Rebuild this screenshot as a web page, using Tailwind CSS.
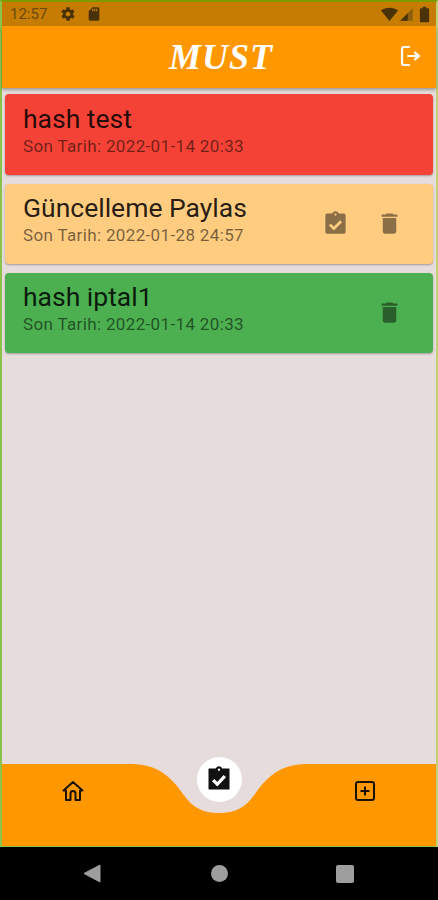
<!DOCTYPE html>
<html lang="en">
<head>
  <meta charset="UTF-8" />
  <meta name="viewport" content="width=device-width, initial-scale=1.0" />
  <title>Must</title>
  <script src="https://cdn.jsdelivr.net/npm/@tailwindcss/browser@4"></script>
</head>
<body class="bg-black font-['Roboto',sans-serif]">
  <div class="flex flex-col w-[438px] h-[900px] overflow-hidden">
    <div class="flex flex-col h-[847px] border-x-2 border-t-2 border-b border-l-[#8bc34a] border-r-[#c3cf74] border-t-[#7d9b00] border-b-[#8bc34a] bg-[#e6dcdb]">
      <!-- status bar -->
      <div class="flex items-center h-[24px] pl-[8px] pr-[4px] bg-[#c67c00] text-[#6b4a10]">
        <span class="text-[15px] w-[51px]">12:57</span>
        <svg class="w-[16px] h-[16px] -ml-[1px]" viewBox="0 0 24 24" fill="#4a3208"><path d="M19.4 13c0-.3.1-.6.1-1s0-.7-.1-1l2.1-1.6c.2-.2.2-.4.1-.6l-2-3.5c-.1-.2-.4-.3-.6-.2l-2.5 1c-.5-.4-1.1-.7-1.7-1l-.4-2.6c0-.3-.2-.5-.5-.5h-4c-.3 0-.5.2-.5.4l-.4 2.7c-.6.2-1.1.6-1.7 1l-2.5-1c-.2-.1-.5 0-.6.2l-2 3.5c-.1.2-.1.5.1.6L4.6 11c0 .3-.1.7-.1 1s0 .7.1 1l-2.1 1.6c-.2.2-.2.4-.1.6l2 3.5c.1.2.4.3.6.2l2.5-1c.5.4 1.1.7 1.7 1l.4 2.6c0 .3.2.5.5.5h4c.3 0 .5-.2.5-.4l.4-2.7c.6-.2 1.200-.6 1.700-1l2.500 1c.2.1.5 0 .6-.2l2-3.500c.1-.2.1-.5-.1-.6L19.400 13zM12 15.500c-1.900 0-3.500-1.600-3.500-3.500s1.600-3.500 3.500-3.500 3.500 1.600 3.500 3.500-1.600 3.500-3.500 3.500z"/></svg>
        <svg class="w-[16px] h-[16px] ml-[10px]" viewBox="0 0 24 24" fill="#4a3208"><path d="M18 2h-8L4 8v12c0 1.100.9 2 2 2h12c1.100 0 2-.9 2-2V4c0-1.100-.9-2-2-2zm-7 6H9V4h2v4zm3 0h-2V4h2v4zm3 0h-2V4h2v4z"/></svg>
        <div class="flex-1"></div>
        <svg class="w-[17px] h-[17px]" viewBox="0 0 24 24" fill="#4a3208"><path d="M12 21 0 6.500C3.300 3.900 7.500 2.500 12 2.500s8.700 1.400 12 4L12 21z"/></svg>
        <svg class="w-[15px] h-[15px] ml-[1px]" viewBox="0 0 24 24"><path d="M22 2v20H2z" fill="#8a6010"/><path d="M14 10v12H2l12-12z" fill="#4a3208"/></svg>
        <svg class="w-[15px] h-[17px] ml-[3px]" viewBox="0 0 15 24" fill="#4a3208"><path d="M5 1h5v2h2.500c.8 0 1.500.7 1.500 1.500v17c0 .8-.7 1.500-1.500 1.500h-10C1.700 23 1 22.300 1 21.500v-17C1 3.700 1.700 3 2.500 3H5z"/></svg>
      </div>

      <!-- app bar -->
      <div class="flex items-center justify-center relative h-[62px] bg-[#ff9800] shadow-[0_2px_3px_rgba(0,0,0,0.3)]">
        <span class="font-['Liberation_Serif',serif] italic font-bold text-white text-[36px] tracking-[1px] leading-none ml-[4px]">MUST</span>
        <svg class="absolute right-[13px] top-[18px] w-[24px] h-[24px]" viewBox="0 0 24 24" fill="none" stroke="#fff" stroke-width="2.200" stroke-linecap="round" stroke-linejoin="round"><path d="M10 3H5a2 2 0 0 0-2 2v14a2 2 0 0 0 2 2h5"/><path d="M9 12h11"/><path d="M16 8.500l4 3.500-4 3.500" fill="#fff"/></svg>
      </div>

      <!-- task list -->
      <div class="flex-1 flex flex-col gap-[9px] pt-[6px] px-[3px]">
        <div class="flex items-center h-[81px] pl-[18px] pr-[30px] rounded-[4px] bg-[#f44336] shadow-[0_1px_2px_rgba(0,0,0,0.3)]">
          <div class="flex-1 -mt-[7px]">
            <div class="text-[26.5px] leading-[30px] text-black/87">hash test</div>
            <div class="text-[17px] tracking-[0.35px] leading-[24px] text-black/55">Son Tarih: 2022-01-14 20:33</div>
          </div>
        </div>
        <div class="flex items-center h-[80px] pl-[18px] pr-[30px] rounded-[4px] bg-[#ffcc80] shadow-[0_1px_2px_rgba(0,0,0,0.3)]">
          <div class="flex-1 -mt-[8px]">
            <div class="text-[26.5px] leading-[30px] text-black/87">Güncelleme Paylas</div>
            <div class="text-[17px] tracking-[0.35px] leading-[24px] text-black/55">Son Tarih: 2022-01-28 24:57</div>
          </div>
          <svg class="w-[27px] h-[27px] mr-[27px] -mt-[2px]" viewBox="0 0 24 24"><path fill="#8a6e45" d="M4.500 3h4.700C9.600 1.800 10.700 1 12 1s2.400.8 2.800 2h4.700c.8 0 1.500.7 1.500 1.500v15c0 .8-.7 1.500-1.500 1.500h-15c-.8 0-1.500-.7-1.500-1.500v-15C3 3.700 3.700 3 4.500 3z"/><circle cx="12" cy="4" r="1" fill="#ffcc80"/><path d="M7 13l3.500 3.500L17 10" fill="none" stroke="#ffcc80" stroke-width="2.400"/></svg>
          <svg class="w-[27px] h-[27px] -mt-[2px]" viewBox="0 0 24 24" fill="#000" fill-opacity="0.46"><path d="M6 19c0 1.100.9 2 2 2h8c1.100 0 2-.9 2-2V7H6v12zM19 4h-3.500l-1-1h-5l-1 1H5v2h14V4z"/></svg>
        </div>
        <div class="flex items-center h-[80px] pl-[18px] pr-[30px] rounded-[4px] bg-[#4caf50] shadow-[0_1px_2px_rgba(0,0,0,0.3)]">
          <div class="flex-1 -mt-[8px]">
            <div class="text-[26.5px] leading-[30px] text-black/87">hash iptal1</div>
            <div class="text-[17px] tracking-[0.35px] leading-[24px] text-black/55">Son Tarih: 2022-01-14 20:33</div>
          </div>
          <svg class="w-[27px] h-[27px] -mt-[2px]" viewBox="0 0 24 24" fill="#000" fill-opacity="0.46"><path d="M6 19c0 1.100.9 2 2 2h8c1.100 0 2-.9 2-2V7H6v12zM19 4h-3.500l-1-1h-5l-1 1H5v2h14V4z"/></svg>
        </div>
      </div>

      <!-- bottom nav -->
      <div class="relative h-[82px]">
        <svg class="absolute left-0 top-0 w-[434px] h-[82px]" viewBox="2 0 434 82"><path fill="#ff9800" d="M2 0H132C158 0 172 14 183 30C193 44 203 49 219 49C235 49 245 44 255 30C266 14 280 0 306 0H436V82H2Z"/></svg>
        <svg class="absolute left-[59px] top-[15px] w-[24px] h-[24px]" viewBox="0 0 24 24" fill="none" stroke="#1a1206" stroke-width="2" stroke-linejoin="round"><path d="M12 3 2.500 11.500h2.500V21h4.500v-6.500a2.500 2.500 0 0 1 5 0V21H19v-9.500h2.500z"/></svg>
        <div class="absolute left-[194.500px] -top-[7px] flex items-center justify-center w-[45px] h-[45px] rounded-full bg-white">
          <svg class="w-[28px] h-[28px] -mt-[2px]" viewBox="0 0 24 24"><path fill="#111" d="M3.500 3h5.700C9.600 1.800 10.700 1 12 1s2.400.8 2.800 2h5.700c.3 0 .5.200.5.500v17c0 .3-.2.500-.5.500h-17c-.3 0-.5-.2-.5-.5v-17c0-.3.200-.5.500-.5z"/><circle cx="12" cy="4" r="1" fill="#fff"/><path d="M7 13l3.500 3.500L17 9.500" fill="none" stroke="#fff" stroke-width="2.800"/></svg>
        </div>
        <svg class="absolute left-[351px] top-[15px] w-[24px] h-[24px]" viewBox="0 0 24 24" fill="none" stroke="#1a1206" stroke-width="2"><rect x="3" y="3" width="18" height="18" rx="2"/><path d="M12 7.500v9M7.500 12h9"/></svg>
      </div>
    </div>

    <!-- android nav -->
    <div class="relative flex-1 bg-black">
      <svg class="absolute left-[83px] top-[17px] w-[18px] h-[19px]" viewBox="0 0 18 19" fill="#9e9e9e"><path d="M17 1v17L1 9.500z" stroke="#9e9e9e" stroke-linejoin="round"/></svg>
      <div class="absolute left-[211px] top-[18px] w-[17px] h-[17px] rounded-full bg-[#9e9e9e]"></div>
      <div class="absolute left-[336px] top-[18px] w-[18px] h-[18px] rounded-[2px] bg-[#9e9e9e]"></div>
    </div>
  </div>
</body>
</html>
